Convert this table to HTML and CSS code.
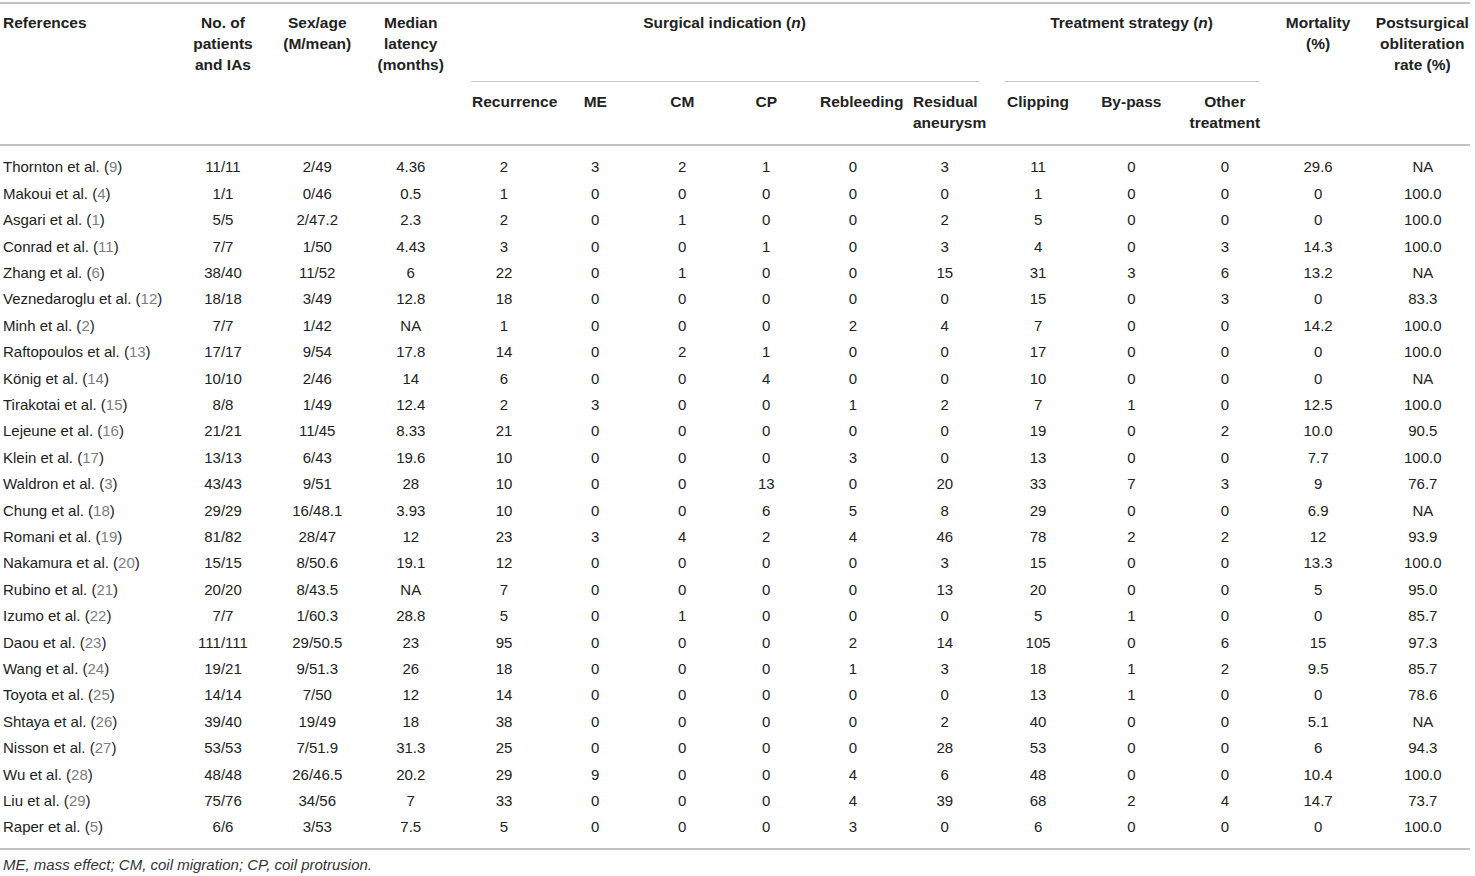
FILE: index.html
```html
<!DOCTYPE html>
<html lang="en">
<head>
  <meta charset="UTF-8" />
  <meta name="viewport" content="width=device-width, initial-scale=1.0" />
  <title>Table 1 - Surgical treatment of recurrent aneurysms</title>
  <link rel="stylesheet" href="styles.css">
</head>
<body>
  <div class="table-wrap">
    <table class="data-table">
      <colgroup>
        <col class="c-ref">
        <col class="c-pat">
        <col class="c-sex">
        <col class="c-lat">
        <col class="c-rec">
        <col class="c-me">
        <col class="c-cm">
        <col class="c-cp">
        <col class="c-reb">
        <col class="c-res">
        <col class="c-clip">
        <col class="c-byp">
        <col class="c-oth">
        <col class="c-mor">
        <col class="c-obl">
      </colgroup>
      <thead>
        <tr>
          <th rowspan="2" class="ref">References</th>
          <th rowspan="2">No. of<br>patients<br>and IAs</th>
          <th rowspan="2">Sex/age<br>(M/mean)</th>
          <th rowspan="2">Median<br>latency<br>(months)</th>
          <th colspan="6" class="group"><div class="group-title">Surgical indication (<i>n</i>)</div></th>
          <th colspan="3" class="group"><div class="group-title">Treatment strategy (<i>n</i>)</div></th>
          <th rowspan="2" class="mor">Mortality<br>(%)</th>
          <th rowspan="2" class="obl">Postsurgical<br>obliteration<br>rate (%)</th>
        </tr>
        <tr class="sub">
          <th class="rec">Recurrence</th>
          <th>ME</th>
          <th>CM</th>
          <th>CP</th>
          <th class="reb">Rebleeding</th>
          <th class="res">Residual<br>aneurysm</th>
          <th>Clipping</th>
          <th>By-pass</th>
          <th>Other<br>treatment</th>
        </tr>
      </thead>
      <tbody>
        <tr><td>Thornton et al. (<a>9</a>)</td><td>11/11</td><td>2/49</td><td>4.36</td><td>2</td><td>3</td><td>2</td><td>1</td><td>0</td><td>3</td><td>11</td><td>0</td><td>0</td><td>29.6</td><td>NA</td></tr>
        <tr><td>Makoui et al. (<a>4</a>)</td><td>1/1</td><td>0/46</td><td>0.5</td><td>1</td><td>0</td><td>0</td><td>0</td><td>0</td><td>0</td><td>1</td><td>0</td><td>0</td><td>0</td><td>100.0</td></tr>
        <tr><td>Asgari et al. (<a>1</a>)</td><td>5/5</td><td>2/47.2</td><td>2.3</td><td>2</td><td>0</td><td>1</td><td>0</td><td>0</td><td>2</td><td>5</td><td>0</td><td>0</td><td>0</td><td>100.0</td></tr>
        <tr><td>Conrad et al. (<a>11</a>)</td><td>7/7</td><td>1/50</td><td>4.43</td><td>3</td><td>0</td><td>0</td><td>1</td><td>0</td><td>3</td><td>4</td><td>0</td><td>3</td><td>14.3</td><td>100.0</td></tr>
        <tr><td>Zhang et al. (<a>6</a>)</td><td>38/40</td><td>11/52</td><td>6</td><td>22</td><td>0</td><td>1</td><td>0</td><td>0</td><td>15</td><td>31</td><td>3</td><td>6</td><td>13.2</td><td>NA</td></tr>
        <tr><td>Veznedaroglu et al. (<a>12</a>)</td><td>18/18</td><td>3/49</td><td>12.8</td><td>18</td><td>0</td><td>0</td><td>0</td><td>0</td><td>0</td><td>15</td><td>0</td><td>3</td><td>0</td><td>83.3</td></tr>
        <tr><td>Minh et al. (<a>2</a>)</td><td>7/7</td><td>1/42</td><td>NA</td><td>1</td><td>0</td><td>0</td><td>0</td><td>2</td><td>4</td><td>7</td><td>0</td><td>0</td><td>14.2</td><td>100.0</td></tr>
        <tr><td>Raftopoulos et al. (<a>13</a>)</td><td>17/17</td><td>9/54</td><td>17.8</td><td>14</td><td>0</td><td>2</td><td>1</td><td>0</td><td>0</td><td>17</td><td>0</td><td>0</td><td>0</td><td>100.0</td></tr>
        <tr><td>König et al. (<a>14</a>)</td><td>10/10</td><td>2/46</td><td>14</td><td>6</td><td>0</td><td>0</td><td>4</td><td>0</td><td>0</td><td>10</td><td>0</td><td>0</td><td>0</td><td>NA</td></tr>
        <tr><td>Tirakotai et al. (<a>15</a>)</td><td>8/8</td><td>1/49</td><td>12.4</td><td>2</td><td>3</td><td>0</td><td>0</td><td>1</td><td>2</td><td>7</td><td>1</td><td>0</td><td>12.5</td><td>100.0</td></tr>
        <tr><td>Lejeune et al. (<a>16</a>)</td><td>21/21</td><td>11/45</td><td>8.33</td><td>21</td><td>0</td><td>0</td><td>0</td><td>0</td><td>0</td><td>19</td><td>0</td><td>2</td><td>10.0</td><td>90.5</td></tr>
        <tr><td>Klein et al. (<a>17</a>)</td><td>13/13</td><td>6/43</td><td>19.6</td><td>10</td><td>0</td><td>0</td><td>0</td><td>3</td><td>0</td><td>13</td><td>0</td><td>0</td><td>7.7</td><td>100.0</td></tr>
        <tr><td>Waldron et al. (<a>3</a>)</td><td>43/43</td><td>9/51</td><td>28</td><td>10</td><td>0</td><td>0</td><td>13</td><td>0</td><td>20</td><td>33</td><td>7</td><td>3</td><td>9</td><td>76.7</td></tr>
        <tr><td>Chung et al. (<a>18</a>)</td><td>29/29</td><td>16/48.1</td><td>3.93</td><td>10</td><td>0</td><td>0</td><td>6</td><td>5</td><td>8</td><td>29</td><td>0</td><td>0</td><td>6.9</td><td>NA</td></tr>
        <tr><td>Romani et al. (<a>19</a>)</td><td>81/82</td><td>28/47</td><td>12</td><td>23</td><td>3</td><td>4</td><td>2</td><td>4</td><td>46</td><td>78</td><td>2</td><td>2</td><td>12</td><td>93.9</td></tr>
        <tr><td>Nakamura et al. (<a>20</a>)</td><td>15/15</td><td>8/50.6</td><td>19.1</td><td>12</td><td>0</td><td>0</td><td>0</td><td>0</td><td>3</td><td>15</td><td>0</td><td>0</td><td>13.3</td><td>100.0</td></tr>
        <tr><td>Rubino et al. (<a>21</a>)</td><td>20/20</td><td>8/43.5</td><td>NA</td><td>7</td><td>0</td><td>0</td><td>0</td><td>0</td><td>13</td><td>20</td><td>0</td><td>0</td><td>5</td><td>95.0</td></tr>
        <tr><td>Izumo et al. (<a>22</a>)</td><td>7/7</td><td>1/60.3</td><td>28.8</td><td>5</td><td>0</td><td>1</td><td>0</td><td>0</td><td>0</td><td>5</td><td>1</td><td>0</td><td>0</td><td>85.7</td></tr>
        <tr><td>Daou et al. (<a>23</a>)</td><td>111/111</td><td>29/50.5</td><td>23</td><td>95</td><td>0</td><td>0</td><td>0</td><td>2</td><td>14</td><td>105</td><td>0</td><td>6</td><td>15</td><td>97.3</td></tr>
        <tr><td>Wang et al. (<a>24</a>)</td><td>19/21</td><td>9/51.3</td><td>26</td><td>18</td><td>0</td><td>0</td><td>0</td><td>1</td><td>3</td><td>18</td><td>1</td><td>2</td><td>9.5</td><td>85.7</td></tr>
        <tr><td>Toyota et al. (<a>25</a>)</td><td>14/14</td><td>7/50</td><td>12</td><td>14</td><td>0</td><td>0</td><td>0</td><td>0</td><td>0</td><td>13</td><td>1</td><td>0</td><td>0</td><td>78.6</td></tr>
        <tr><td>Shtaya et al. (<a>26</a>)</td><td>39/40</td><td>19/49</td><td>18</td><td>38</td><td>0</td><td>0</td><td>0</td><td>0</td><td>2</td><td>40</td><td>0</td><td>0</td><td>5.1</td><td>NA</td></tr>
        <tr><td>Nisson et al. (<a>27</a>)</td><td>53/53</td><td>7/51.9</td><td>31.3</td><td>25</td><td>0</td><td>0</td><td>0</td><td>0</td><td>28</td><td>53</td><td>0</td><td>0</td><td>6</td><td>94.3</td></tr>
        <tr><td>Wu et al. (<a>28</a>)</td><td>48/48</td><td>26/46.5</td><td>20.2</td><td>29</td><td>9</td><td>0</td><td>0</td><td>4</td><td>6</td><td>48</td><td>0</td><td>0</td><td>10.4</td><td>100.0</td></tr>
        <tr><td>Liu et al. (<a>29</a>)</td><td>75/76</td><td>34/56</td><td>7</td><td>33</td><td>0</td><td>0</td><td>0</td><td>4</td><td>39</td><td>68</td><td>2</td><td>4</td><td>14.7</td><td>73.7</td></tr>
        <tr><td>Raper et al. (<a>5</a>)</td><td>6/6</td><td>3/53</td><td>7.5</td><td>5</td><td>0</td><td>0</td><td>0</td><td>3</td><td>0</td><td>6</td><td>0</td><td>0</td><td>0</td><td>100.0</td></tr>
      </tbody>
    </table>
    <p class="table-note">ME, mass effect; CM, coil migration; CP, coil protrusion.</p>
  </div>
</body>
</html>
```

FILE: styles.css
```css
body {
  font-family: 'Liberation Sans', Arial, sans-serif;
  background-color: #ffffff;
  color: #222222;
  margin: 0;
  padding: 0;
}
.table-wrap {
  width: 1470px;
  padding-top: 2px;
}
.data-table {
  width: 1470px;
  table-layout: fixed;
  border-collapse: separate;
  border-spacing: 0;
  border-top: 2px solid #c2c2c2;
  border-bottom: 2px solid #c2c2c2;
  font-size: 15px;
}
.c-ref { width: 175.5px; }
.c-pat { width: 95px; }
.c-sex { width: 93.5px; }
.c-lat { width: 93.5px; }
.c-rec { width: 93px; }
.c-me { width: 89.5px; }
.c-cm { width: 84.5px; }
.c-cp { width: 83.5px; }
.c-reb { width: 90px; }
.c-res { width: 93.5px; }
.c-clip { width: 93px; }
.c-byp { width: 93.5px; }
.c-oth { width: 93.5px; }
.c-mor { width: 97px; }
.c-obl { width: 101.5px; }

/* header */
th {
  font-size: 15.5px;
  font-weight: bold;
  line-height: 21px;
  text-align: center;
  vertical-align: top;
  white-space: nowrap;
  padding: 7.5px 0 0 0;
  border-bottom: 2px solid #c2c2c2;
}
th.ref {
  text-align: left;
  padding-left: 3px;
}
th.group {
  border-bottom: none;
}
.group-title {
  margin: 0 13px;
  padding-bottom: 48.5px;
  border-bottom: 1px solid #c8c8c8;
}
.sub th {
  padding: 8.5px 0 11.5px 0;
}
.sub th.rec {
  padding-left: 14.5px;
}
.sub th.reb {
  padding-left: 12px;
}
.sub th.res {
  text-align: left;
  padding-left: 15px;
}
th.mor {
  padding-right: 4px;
}
th.obl {
  padding-left: 6px;
}

/* body rows */
td {
  line-height: 16.4px;
  padding: 5px 0;
  text-align: center;
  white-space: nowrap;
}
td:first-child {
  text-align: left;
  padding-left: 3px;
}
td:nth-child(14) {
  padding-right: 4px;
}
td:nth-child(15) {
  padding-left: 7px;
}
tbody tr:first-child td {
  padding-top: 13.3px;
}
tbody tr:last-child td {
  padding-bottom: 12.5px;
}
td a {
  color: #7d7d7d;
  text-decoration: none;
}
.table-note {
  margin: 6px 0 0 3px;
  font-size: 15px;
  font-style: italic;
  line-height: 18px;
  color: #333333;
}
```
